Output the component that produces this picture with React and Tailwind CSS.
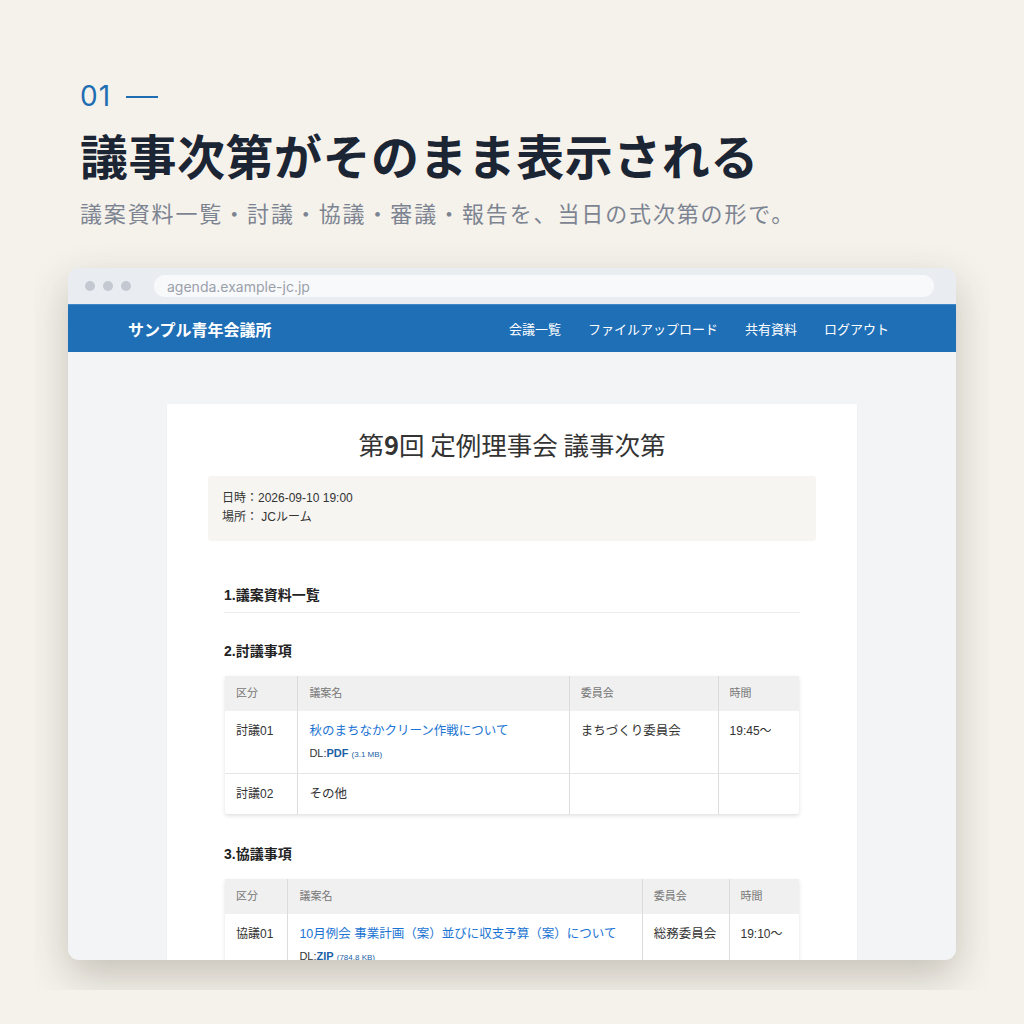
import React from "react";

const jp = { fontFamily: '"Noto Sans CJK JP", "Noto Sans", sans-serif' };
const web = { fontFamily: '"Liberation Sans", "Noto Sans CJK JP", sans-serif' };

const Table = ({ cols, rows }) => (
  <div className="mx-[17px] shadow-[0_2px_4px_rgba(0,0,0,0.12)] rounded-b-[3px]">
    <table className="w-full border-collapse text-[12px] text-[#333]">
      <thead>
        <tr className="bg-[#f0f0f0] h-[35px] text-[11px] text-[#777]">
          {cols.map((c, i) => (
            <th key={c.label} style={{ width: c.w }} className={`text-left font-normal pl-[11px] ${i > 0 ? "border-l border-[#dcdcdc]" : ""}`}>
              {c.label}
            </th>
          ))}
        </tr>
      </thead>
      <tbody>
        {rows.map((r, ri) => (
          <tr key={ri} className={ri > 0 ? "border-t border-[#e6e6e6]" : ""}>
            <td className="pl-[11px] align-top py-[11px] leading-[18px]">{r.kind}</td>
            <td className="pl-[11px] align-top py-[11px] border-l border-[#dcdcdc]">
              {r.link ? (
                <>
                  <div className="text-[#1b74d3] text-[12.5px] leading-[18px]">{r.title}</div>
                  <div className="mt-[6px] text-[11px] leading-[14px]">
                    DL:<span className="font-bold text-[#1b5fa6]">{r.file}</span>{" "}
                    <span className="text-[8px] text-[#1b5fa6]">({r.size})</span>
                  </div>
                </>
              ) : (
                <div className="leading-[18px] text-[12.5px]">{r.title}</div>
              )}
            </td>
            <td className="pl-[11px] align-top py-[11px] leading-[18px] text-[12.5px] border-l border-[#dcdcdc]">{r.com}</td>
            <td className="pl-[11px] align-top py-[11px] leading-[18px] border-l border-[#dcdcdc]">{r.time}</td>
          </tr>
        ))}
      </tbody>
    </table>
  </div>
);

export default function App() {
  return (
    <div className="w-[1024px] h-[1024px] bg-[#f5f2ec] overflow-hidden" style={jp}>
      <div className="pl-[80px] pt-[80px]">
        <div className="flex items-center gap-[15px] text-[#1f6db3] text-[28px] leading-[32px] tracking-[0.04em]" style={{ fontFamily: 'Inter, "Noto Sans", sans-serif' }}>
          <span>01</span>
          <span className="block w-[32px] h-[2px] bg-[#1f6db3] mt-[1px]"></span>
        </div>
        <h1 className="mt-[12px] text-[48px] leading-[60px] font-bold text-[#1c2533] tracking-[0.01em]">
          議事次第がそのまま表示される
        </h1>
        <p className="mt-[13px] text-[22px] leading-[30px] text-[#7d8491] tracking-[0.085em]">
          議案資料一覧・討議・協議・審議・報告を、当日の式次第の形で。
        </p>
      </div>

      <div className="mt-[11px] ml-[34px] w-[956px] h-[752px] overflow-hidden pt-[30px] px-[34px]">
        <div className="h-[692px] rounded-[11px] bg-[#f3f4f6] overflow-hidden shadow-[0_16px_40px_rgba(50,40,20,0.24)] flex flex-col">
          <div className="h-[36px] bg-[#e9ecf0] flex items-center pl-[17px] pr-[22px] shrink-0">
            <div className="flex gap-[8px]">
              <span className="w-[10px] h-[10px] rounded-full bg-[#c4c8d0]"></span>
              <span className="w-[10px] h-[10px] rounded-full bg-[#c4c8d0]"></span>
              <span className="w-[10px] h-[10px] rounded-full bg-[#c4c8d0]"></span>
            </div>
            <div className="ml-[23px] flex-1 h-[22px] rounded-full bg-[#f8f9fb] flex items-center pl-[13px] text-[14px] text-[#9aa0aa]" style={{ fontFamily: 'Inter, sans-serif' }}>
              agenda.example-jc.jp
            </div>
          </div>
          <div className="h-[48px] bg-[#1f6fb7] flex items-center pl-[60px] pr-[67px] shrink-0 text-white border-t border-[#3f86c6]">
            <div className="text-[16px] font-bold">サンプル青年会議所</div>
            <div className="ml-auto flex gap-[27px] text-[13px]">
              <span>会議一覧</span>
              <span>ファイルアップロード</span>
              <span>共有資料</span>
              <span>ログアウト</span>
            </div>
          </div>
          <div className="flex-1 pt-[52px] flex justify-center">
            <div className="w-[690px] bg-white pt-[22px] px-[41px] self-start shadow-[0_1px_2px_rgba(0,0,0,0.04)]" style={web}>
              <h2 className="text-center text-[25.5px] leading-[36px] text-[#333]" style={jp}>
                第<span className="font-bold">9</span>回 定例理事会 議事次第
              </h2>
              <div className="mt-[14px] bg-[#f6f5f2] rounded-[3px] px-[14px] pt-[13px] pb-[14px] text-[12px] leading-[19px] text-[#333]">
                <div>日時：2026-09-10 19:00</div>
                <div>場所： JCルーム</div>
              </div>
              <div className="mt-[44px] mx-[16px] pb-[6px] border-b border-[#ececec] text-[14px] font-bold text-[#222]">1.議案資料一覧</div>
              <div className="mt-[28px] mx-[16px] text-[14px] font-bold text-[#222]">2.討議事項</div>
              <div className="mt-[14px]">
                <Table
                  cols={[
                    { label: "区分", w: 73 },
                    { label: "議案名", w: 272 },
                    { label: "委員会", w: 149 },
                    { label: "時間", w: 81 },
                  ]}
                  rows={[
                    { kind: "討議01", link: true, title: "秋のまちなかクリーン作戦について", file: "PDF", size: "3.1 MB", com: "まちづくり委員会", time: "19:45〜" },
                    { kind: "討議02", title: "その他", com: "", time: "" },
                  ]}
                />
              </div>
              <div className="mt-[30px] mx-[16px] text-[14px] font-bold text-[#222]">3.協議事項</div>
              <div className="mt-[14px]">
                <Table
                  cols={[
                    { label: "区分", w: 63 },
                    { label: "議案名", w: 355 },
                    { label: "委員会", w: 87 },
                    { label: "時間", w: 70 },
                  ]}
                  rows={[
                    { kind: "協議01", link: true, title: "10月例会 事業計画（案）並びに収支予算（案）について", file: "ZIP", size: "784.8 KB", com: "総務委員会", time: "19:10〜" },
                  ]}
                />
              </div>
              <div className="h-[60px]"></div>
            </div>
          </div>
        </div>
      </div>
    </div>
  );
}
